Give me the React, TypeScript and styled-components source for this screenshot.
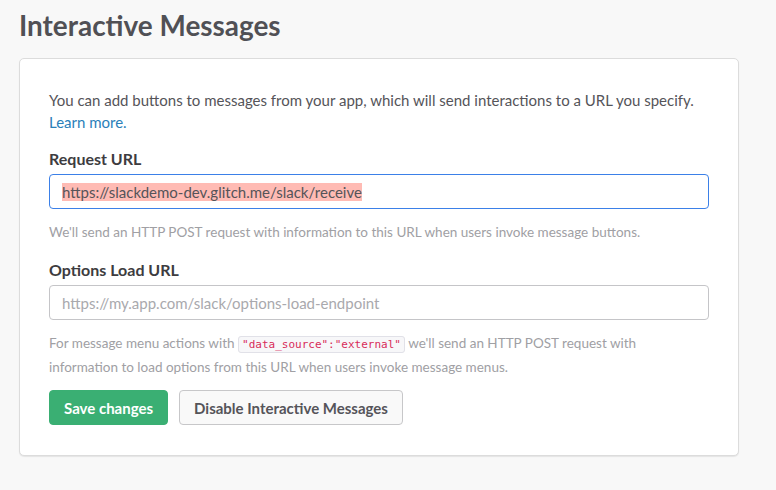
import React from "react";
import styled, { createGlobalStyle } from "styled-components";

const Global = createGlobalStyle`
  html, body { margin: 0; padding: 0; background: #f8f8f8; }
  body { font-family: Lato, "Noto Sans", sans-serif; -webkit-font-smoothing: antialiased; }
  * { box-sizing: border-box; }
`;

const Page = styled.div`
  padding: 7px 19px 34px 19px;
`;

const Title = styled.h1`
  margin: 0 0 15px 0;
  font-size: 27.9px;
  line-height: 36px;
  font-weight: 700;
  color: #505055;
`;

const Card = styled.section`
  width: 720px;
  background: #fff;
  border: 1px solid #dcdcdc;
  border-radius: 5px;
  box-shadow: 0 1px 1px rgba(0, 0, 0, 0.08);
  padding: 30px 29px 30px 29px;
`;

const Intro = styled.p`
  margin: 0 0 15px 0;
  font-size: 15px;
  line-height: 22px;
  color: #555459;
`;

const Link = styled.a`
  color: #2a80b9;
  text-decoration: none;
`;

const Label = styled.label`
  display: block;
  margin: 0 0 4px 0;
  font-size: 16px;
  line-height: 22px;
  font-weight: 700;
  color: #3d3c40;
`;

const Field = styled.div<{ $focused?: boolean }>`
  height: 35px;
  display: flex;
  align-items: center;
  padding: 0 12px;
  border: 1px solid ${(p) => (p.$focused ? "#3b80e8" : "#c5c5c8")};
  border-radius: 4px;
  font-size: 15px;
  color: ${(p) => (p.$focused ? "#555459" : "#a9a9ad")};
  background: #fff;
`;

const Highlight = styled.span`
  background: #ffbbb4;
  line-height: 18px;
`;

const Help = styled.p<{ $last?: boolean }>`
  max-width: 620px;
  margin: 11px 0 ${(p) => (p.$last ? "11px" : "15px")} 0;
  font-size: 13.5px;
  line-height: 24px;
  color: #a0a0a4;
`;

const Code = styled.code`
  font-family: "DejaVu Sans Mono", "Liberation Mono", monospace;
  font-size: 11px;
  line-height: 15px;
  color: #d72b5a;
  background: #f7f7f9;
  border: 1px solid #e1e1e8;
  border-radius: 3px;
  padding: 1px 3px;
`;

const Actions = styled.div`
  display: flex;
  gap: 11px;
`;

const Button = styled.button<{ $primary?: boolean }>`
  height: 35px;
  padding: 0 14px;
  border-radius: 4px;
  font-family: Lato, "Noto Sans", sans-serif;
  font-size: 15px;
  font-weight: 700;
  cursor: pointer;
  border: 1px solid ${(p) => (p.$primary ? "#3aaf73" : "#c7c7c9")};
  background: ${(p) => (p.$primary ? "#3aaf73" : "#f9f9f9")};
  color: ${(p) => (p.$primary ? "#fff" : "#555459")};
`;

export default function App() {
  return (
    <>
      <Global />
      <Page>
        <Title>Interactive Messages</Title>
        <Card>
          <Intro>
            You can add buttons to messages from your app, which will send interactions to a URL you specify.{" "}
            <Link href="#">Learn more.</Link>
          </Intro>
          <Label>Request URL</Label>
          <Field $focused>
            <Highlight>https://slackdemo-dev.glitch.me/slack/receive</Highlight>
          </Field>
          <Help>We'll send an HTTP POST request with information to this URL when users invoke message buttons.</Help>
          <Label>Options Load URL</Label>
          <Field>https://my.app.com/slack/options-load-endpoint</Field>
          <Help $last>
            For message menu actions with <Code>"data_source":"external"</Code> we'll send an HTTP POST request with
            information to load options from this URL when users invoke message menus.
          </Help>
          <Actions>
            <Button $primary>Save changes</Button>
            <Button>Disable Interactive Messages</Button>
          </Actions>
        </Card>
      </Page>
    </>
  );
}
